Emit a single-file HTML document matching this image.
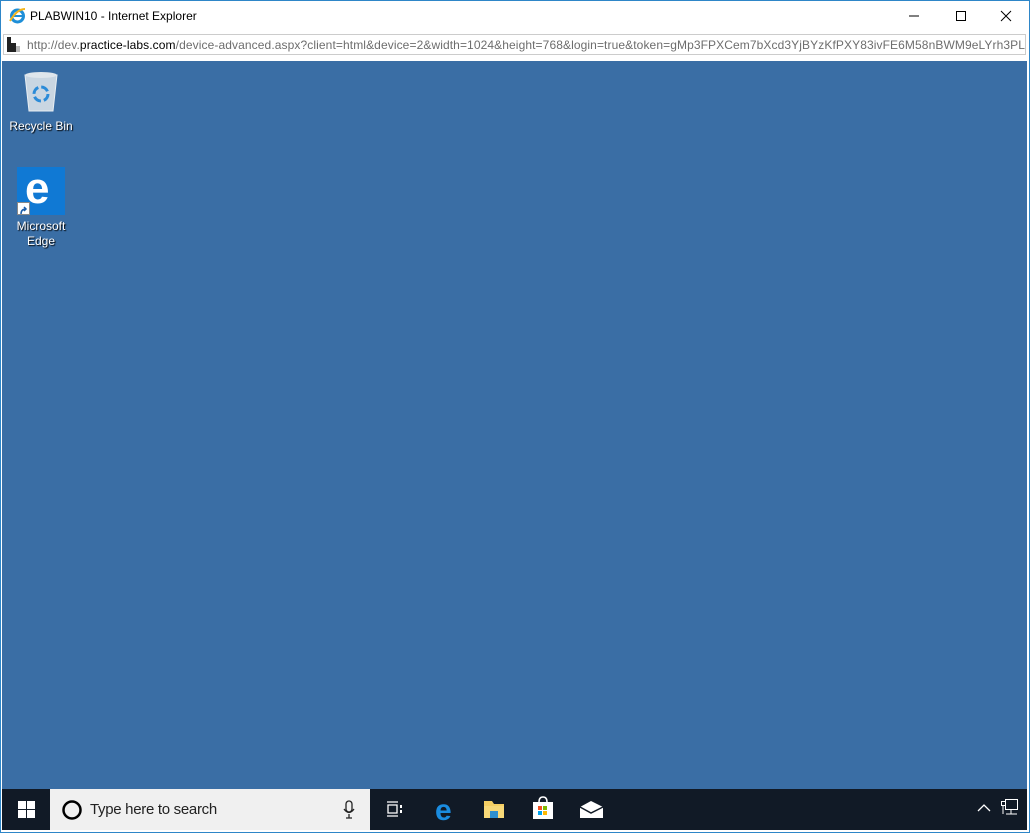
<!DOCTYPE html>
<html><head><style>
*{margin:0;padding:0;box-sizing:border-box}
body{width:1030px;height:833px;background:#fff;position:relative;overflow:hidden;font-family:"Liberation Sans",sans-serif}
.frame{position:absolute;left:0;top:0;width:1030px;height:833px;border:1px solid #2e86c8}
.title{position:absolute;left:30px;top:9px;font-size:12px;color:#000}
.url{position:absolute;left:3px;top:34px;width:1023px;height:21px;border:1px solid #ccc;font-size:12px;color:#6d6d6d;padding:3px 0 0 23px;white-space:nowrap;overflow:hidden;letter-spacing:0.1px}
.url b{color:#000;font-weight:normal}
.desk{position:absolute;left:2px;top:61px;width:1025px;height:728px;background:#3a6ea5}
.tb{position:absolute;left:2px;top:789px;width:1025px;height:41px;background:#111a26}
.search{position:absolute;left:48px;top:0;width:320px;height:41px;background:#f0f0f0;font-size:15px;color:#222}
.lbl{position:absolute;color:#fff;font-size:12px;text-align:center;text-shadow:1px 1px 1px #000;line-height:15px}
</style></head><body>
<div class="frame"></div>
<svg style="position:absolute;left:9px;top:7px" width="17" height="17" viewBox="0 0 17 17"><circle cx="8.5" cy="9" r="6" fill="none" stroke="#1e8fd8" stroke-width="3"/><rect x="4" y="8" width="9" height="2" fill="#1e8fd8"/><path d="M1 14 Q8 2 16 2" fill="none" stroke="#f3b51c" stroke-width="2"/></svg>
<div class="title">PLABWIN10 - Internet Explorer</div>
<svg style="position:absolute;left:905px;top:8px" width="110" height="16"><line x1="4" y1="8" x2="14" y2="8" stroke="#000"/><rect x="51.5" y="3.5" width="9" height="9" fill="none" stroke="#000"/><path d="M96 3 L106 13 M106 3 L96 13" stroke="#000"/></svg>
<div class="url">http://dev.<b>practice-labs.com</b>/device-advanced.aspx?client=html&amp;device=2&amp;width=1024&amp;height=768&amp;login=true&amp;token=gMp3FPXCem7bXcd3YjBYzKfPXY83ivFE6M58nBWM9eLYrh3PLo6</div>
<svg style="position:absolute;left:7px;top:37px" width="14" height="15"><rect x="0" y="0" width="4" height="15" fill="#222"/><rect x="4" y="6" width="5" height="9" fill="#222"/><rect x="9" y="9" width="4" height="6" fill="#bbb"/></svg>
<div class="desk">
<svg style="position:absolute;left:20px;top:8px" width="38" height="44"><path d="M3 6 L35 6 L31 42 L7 42 Z" fill="#c9d6e2" stroke="#e8eef3"/><ellipse cx="19" cy="6" rx="16" ry="3" fill="#dfe6ec"/><circle cx="19" cy="25" r="7" fill="none" stroke="#2b8bd8" stroke-width="3" stroke-dasharray="8 3"/></svg>
<div class="lbl" style="left:4px;top:58px;width:70px">Recycle Bin</div>
<div style="position:absolute;left:15px;top:106px;width:48px;height:48px;background:#1079d4"></div>
<div style="position:absolute;left:23px;top:103px;color:#fff;font:bold 44px 'Liberation Sans',sans-serif">e</div>
<div style="position:absolute;left:15px;top:141px;width:13px;height:13px;background:#fff;border:1px solid #888"><svg width="11" height="11"><path d="M3 9 Q3 4 8 4 M6 2 L8 4 L6 6" stroke="#1a5ca8" stroke-width="1.5" fill="none"/></svg></div>
<div class="lbl" style="left:4px;top:158px;width:70px">Microsoft<br>Edge</div>
</div>
<div class="tb">
<svg style="position:absolute;left:16px;top:12px" width="17" height="17" fill="#fff"><rect x="0" y="0" width="8" height="8"/><rect x="9" y="0" width="8" height="8"/><rect x="0" y="9" width="8" height="8"/><rect x="9" y="9" width="8" height="8"/></svg>
<div class="search">
<svg style="position:absolute;left:11px;top:10px" width="22" height="22"><circle cx="11" cy="11" r="8.5" fill="none" stroke="#000" stroke-width="2.5"/></svg>
<div style="position:absolute;left:40px;top:12px;letter-spacing:-0.3px">Type here to search</div>
<svg style="position:absolute;left:293px;top:11px" width="12" height="19"><rect x="3" y="1" width="6" height="11" rx="3" fill="none" stroke="#222" stroke-width="1.3"/><path d="M1 9 Q6 16 11 9 M6 14 V18 M3 18 H9" stroke="#222" fill="none" stroke-width="1.3"/></svg>
</div>
<svg style="position:absolute;left:384px;top:12px" width="18" height="17"><path d="M1 1 H12 M1 15 H12 M2 4 H11 V12 H2 Z" stroke="#fff" fill="none" stroke-width="1.3"/><rect x="14" y="4" width="2" height="3" fill="#fff"/><rect x="14" y="9" width="2" height="3" fill="#fff"/></svg>
<div style="position:absolute;left:433px;top:5px;color:#1a8ce0;font:bold 30px 'Liberation Sans',sans-serif">e</div>
<svg style="position:absolute;left:481px;top:10px" width="22" height="20"><path d="M1 2 H9 L11 5 H21 V19 H1 Z" fill="#f5cf63"/><rect x="1" y="7" width="20" height="12" fill="#f8d978"/><rect x="7" y="12" width="8" height="7" fill="#2d8fcf"/></svg>
<svg style="position:absolute;left:530px;top:7px" width="22" height="24"><path d="M7 6 Q7 1 11 1 Q15 1 15 6" stroke="#fff" fill="none" stroke-width="1.5"/><rect x="1" y="6" width="20" height="17" fill="#fff"/><rect x="6" y="10" width="4" height="4" fill="#f25022"/><rect x="11" y="10" width="4" height="4" fill="#7fba00"/><rect x="6" y="15" width="4" height="4" fill="#00a4ef"/><rect x="11" y="15" width="4" height="4" fill="#ffb900"/></svg>
<svg style="position:absolute;left:577px;top:12px" width="25" height="17"><path d="M1 6 L12 0 L24 6 V17 H1 Z" fill="#fff"/><path d="M1 6 L12 12 L24 6" stroke="#111a26" fill="none" stroke-width="1.5"/></svg>
<svg style="position:absolute;left:975px;top:14px" width="14" height="9"><path d="M1 8 L7 2 L13 8" stroke="#fff" fill="none" stroke-width="1.3"/></svg>
<svg style="position:absolute;left:999px;top:9px" width="18" height="20"><rect x="4.5" y="1.5" width="12" height="10" fill="none" stroke="#fff"/><rect x="0.5" y="3.5" width="4" height="4" fill="#111a26" stroke="#fff"/><path d="M2 8 V16 M10 12 V16 M5 16 H16" stroke="#fff"/></svg>
</div>
</body></html>
